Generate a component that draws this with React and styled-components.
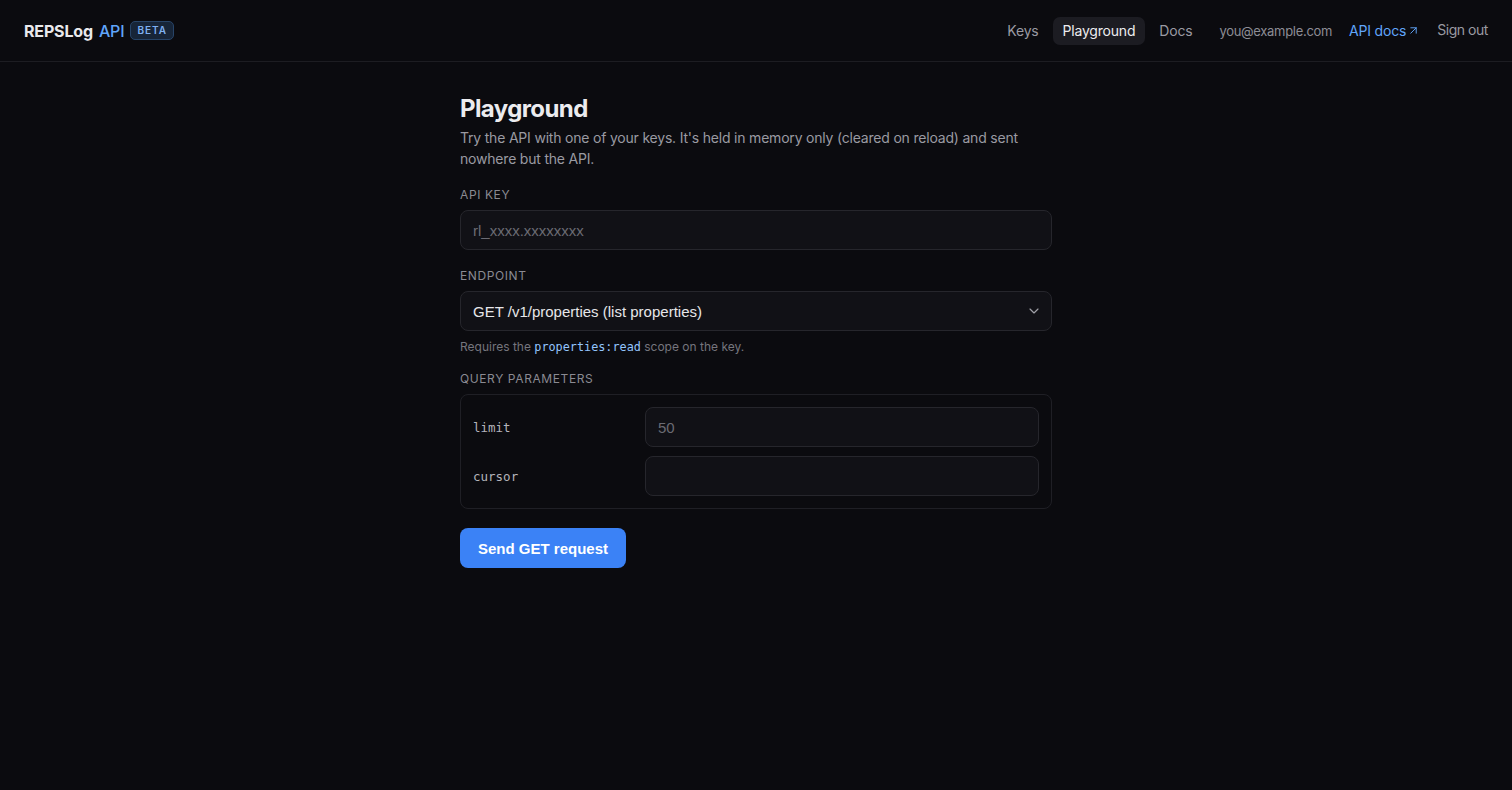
import React, { useState } from "react";
import styled, { createGlobalStyle } from "styled-components";
import { ChevronDown, ArrowUpRight } from "lucide-react";

const GlobalStyle = createGlobalStyle`
  * { box-sizing: border-box; }
  html, body {
    margin: 0;
    background: #0b0b0f;
    color: #e7e7ea;
    font-family: Inter, "Noto Sans", sans-serif;
  }
`;

const endpoints = [
  {
    value: "list-properties",
    label: "GET /v1/properties (list properties)",
    scope: "properties:read",
    params: [
      { name: "limit", placeholder: "50" },
      { name: "cursor", placeholder: "" },
    ],
  },
];

const App = () => {
  const [apiKey, setApiKey] = useState("");
  const [endpoint, setEndpoint] = useState(endpoints[0].value);
  const current = endpoints.find((e) => e.value === endpoint);

  return (
    <Page>
      <GlobalStyle />
      <Header>
        <Brand>
          REPSLog <BrandAccent>API</BrandAccent>
          <Badge>BETA</Badge>
        </Brand>
        <Nav>
          <NavLink>Keys</NavLink>
          <NavLink $active>Playground</NavLink>
          <NavLink>Docs</NavLink>
          <Email>you@example.com</Email>
          <ExternalLink>
            API docs <ArrowUpRight size={13} strokeWidth={1.75} />
          </ExternalLink>
          <SignOut>Sign out</SignOut>
        </Nav>
      </Header>

      <Main>
        <Title>Playground</Title>
        <Lead>
          Try the API with one of your keys. It's held in memory only (cleared on reload) and sent
          nowhere but the API.
        </Lead>

        <Field>
          <Label>API key</Label>
          <Input
            value={apiKey}
            onChange={(e) => setApiKey(e.target.value)}
            placeholder="rl_xxxx.xxxxxxxx"
          />
        </Field>

        <Field>
          <Label>Endpoint</Label>
          <SelectWrap>
            <Select value={endpoint} onChange={(e) => setEndpoint(e.target.value)}>
              {endpoints.map((e) => (
                <option key={e.value} value={e.value}>
                  {e.label}
                </option>
              ))}
            </Select>
            <Chevron>
              <ChevronDown size={16} strokeWidth={1.75} />
            </Chevron>
          </SelectWrap>
          <Hint>
            Requires the <Code>{current.scope}</Code> scope on the key.
          </Hint>
        </Field>

        <Field $gap={15}>
          <Label>Query parameters</Label>
          <ParamBox>
            {current.params.map((p) => (
              <ParamRow key={p.name}>
                <ParamName>{p.name}</ParamName>
                <Input placeholder={p.placeholder} />
              </ParamRow>
            ))}
          </ParamBox>
        </Field>

        <SendButton type="button">Send GET request</SendButton>
      </Main>
    </Page>
  );
};

export default App;

const Page = styled.div`
  min-height: 100vh;
  background: #0b0b0f;
`;

const Header = styled.header`
  height: 62px;
  display: flex;
  align-items: center;
  justify-content: space-between;
  padding: 0 24px;
  border-bottom: 1px solid #1d1d22;
`;

const Brand = styled.div`
  display: flex;
  align-items: center;
  gap: 6px;
  font-size: 16px;
  font-weight: 700;
  color: #e9e9ec;
  letter-spacing: -0.01em;
`;

const BrandAccent = styled.span`
  color: #60a5fa;
  font-weight: 500;
`;

const Badge = styled.span`
  padding: 1px 6px;
  font-size: 10px;
  font-weight: 600;
  letter-spacing: 0.1em;
  color: #7fb0f0;
  background: #172538;
  border: 1px solid #274468;
  border-radius: 5px;
  line-height: 15px;
`;

const Nav = styled.nav`
  display: flex;
  align-items: center;
  gap: 4px;
  font-size: 14px;
  letter-spacing: -0.2px;
`;

const NavLink = styled.a`
  padding: 5px 10px;
  border-radius: 7px;
  line-height: 18px;
  color: ${(p) => (p.$active ? "#ececef" : "#9a9aa2")};
  background: ${(p) => (p.$active ? "#1c1c22" : "transparent")};
  cursor: pointer;
`;

const Email = styled.span`
  margin-left: 13px;
  font-size: 13px;
  letter-spacing: -0.3px;
  color: #8d8d95;
`;

const ExternalLink = styled.a`
  margin-left: 13px;
  display: inline-flex;
  align-items: center;
  gap: 1px;
  color: #60a5fa;
  cursor: pointer;
`;

const SignOut = styled.button`
  margin-left: 13px;
  margin-top: -2px;
  padding: 0;
  background: none;
  border: none;
  font: inherit;
  letter-spacing: -0.45px;
  color: #9a9aa2;
  cursor: pointer;
`;

const Main = styled.main`
  width: 592px;
  margin: 0 auto;
  padding-top: 31px;
  display: flex;
  flex-direction: column;
`;

const Title = styled.h1`
  margin: 0;
  font-size: 24px;
  line-height: 32px;
  font-weight: 700;
  color: #ececef;
  letter-spacing: -0.025em;
`;

const Lead = styled.p`
  margin: 2px 0 0;
  font-size: 14px;
  line-height: 21px;
  letter-spacing: -0.2px;
  color: #9a9aa2;
`;

const Field = styled.div`
  margin-top: ${(p) => p.$gap ?? 17}px;
  display: flex;
  flex-direction: column;
`;

const Label = styled.label`
  font-size: 12px;
  line-height: 16px;
  text-transform: uppercase;
  letter-spacing: 0.05em;
  color: #8a8a92;
  margin: 1px 0 7px;
`;

const Input = styled.input`
  width: 100%;
  height: 40px;
  padding: 0 12px;
  font-family: "Liberation Sans", Arial, sans-serif;
  font-size: 15px;
  color: #e7e7ea;
  background: #111116;
  border: 1px solid #26262c;
  border-radius: 8px;
  outline: none;

  &::placeholder {
    color: #6b6b73;
  }
`;

const SelectWrap = styled.div`
  position: relative;
`;

const Select = styled.select`
  width: 100%;
  height: 40px;
  padding: 0 36px 0 12px;
  appearance: none;
  font-family: "Liberation Sans", Arial, sans-serif;
  font-size: 15px;
  color: #e7e7ea;
  background: #111116;
  border: 1px solid #26262c;
  border-radius: 8px;
  outline: none;
`;

const Chevron = styled.span`
  position: absolute;
  right: 10px;
  top: 12px;
  color: #a0a0a8;
  pointer-events: none;
  display: flex;
`;

const Hint = styled.p`
  margin: 8px 0 0;
  font-size: 12px;
  line-height: 16px;
  color: #75757d;
`;

const Code = styled.code`
  font-family: "DejaVu Sans Mono", "Liberation Mono", monospace;
  font-size: 11.8px;
  color: #93c5fd;
`;

const ParamBox = styled.div`
  padding: 12px;
  border: 1px solid #1f1f25;
  border-radius: 8px;
  display: flex;
  flex-direction: column;
  gap: 9px;
`;

const ParamRow = styled.div`
  display: grid;
  grid-template-columns: 160px 1fr;
  gap: 12px;
  align-items: center;
`;

const ParamName = styled.span`
  font-family: "DejaVu Sans Mono", "Liberation Mono", monospace;
  font-size: 12.5px;
  color: #b4b4bb;
`;

const SendButton = styled.button`
  align-self: flex-start;
  margin-top: 19px;
  height: 40px;
  padding: 0 18px;
  font-family: "Liberation Sans", Arial, sans-serif;
  font-size: 15px;
  font-weight: 700;
  color: #ffffff;
  background: #3b82f6;
  border: none;
  border-radius: 8px;
  cursor: pointer;
`;
